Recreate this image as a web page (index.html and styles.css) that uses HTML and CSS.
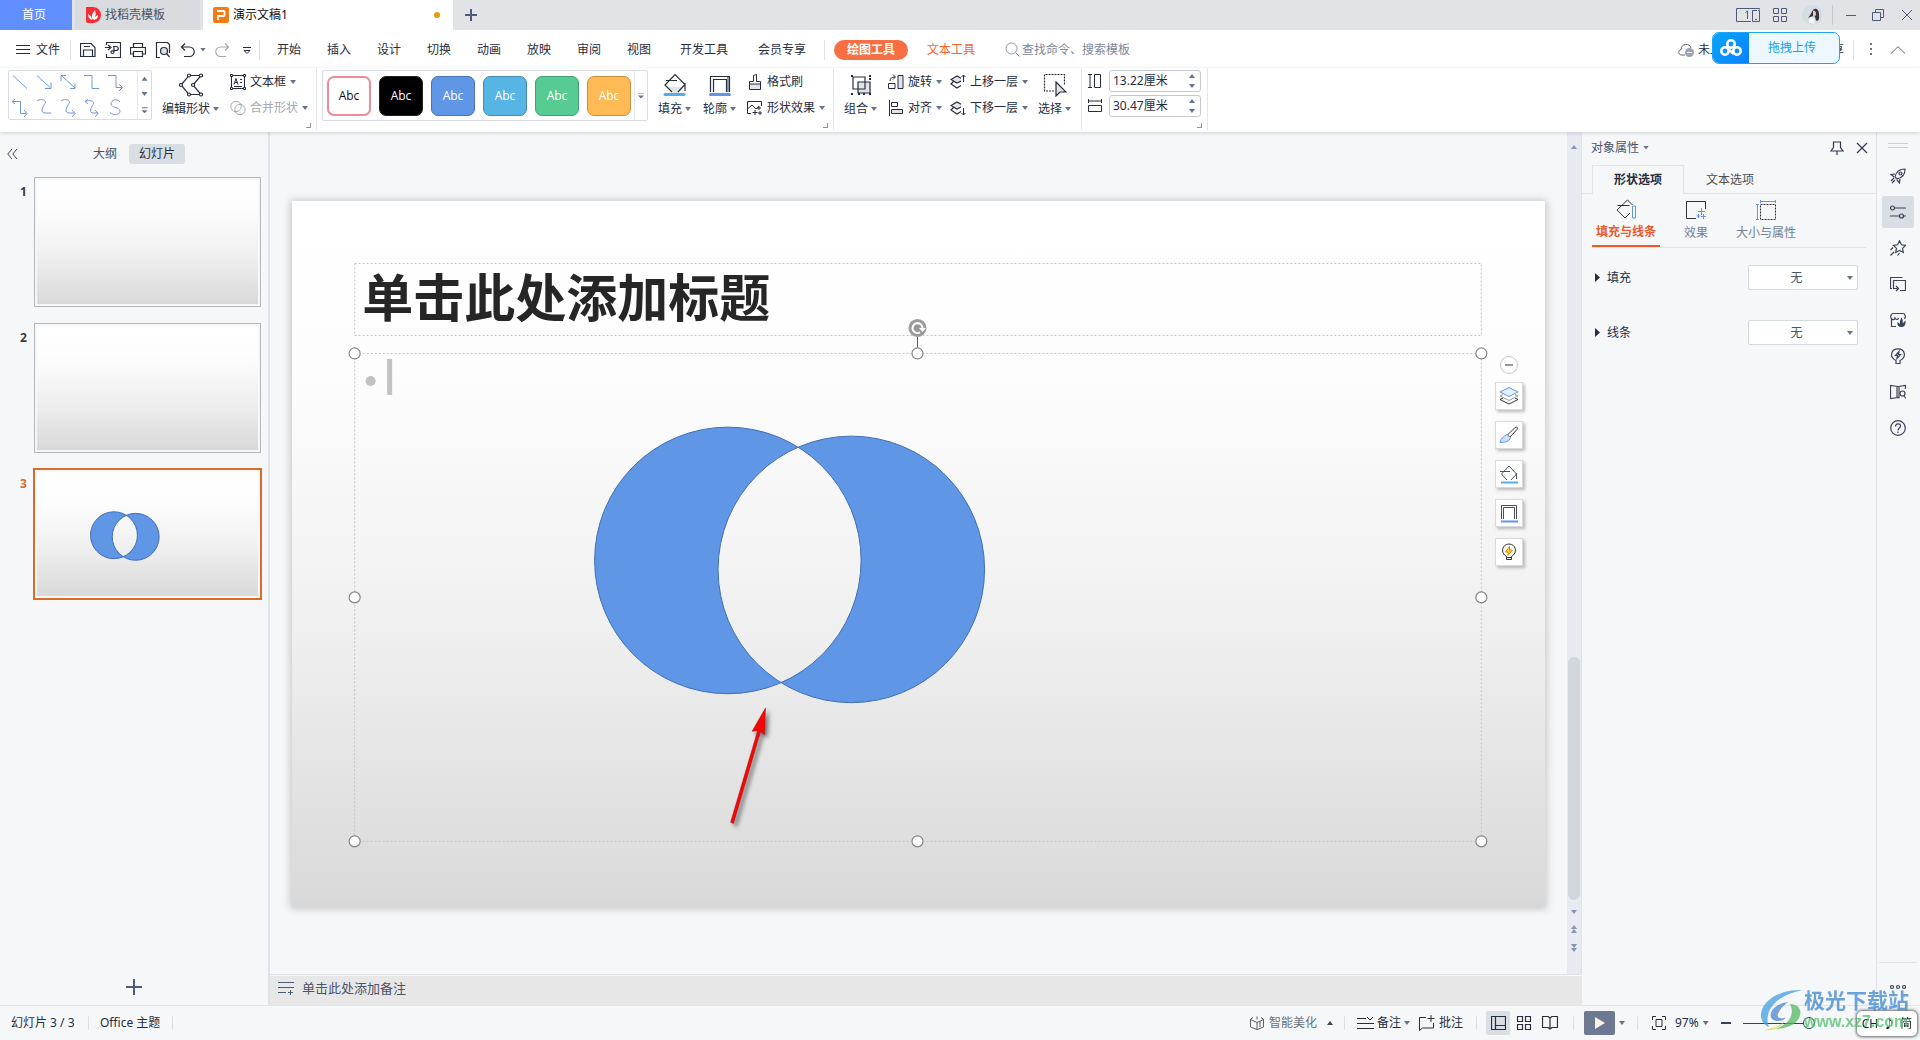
FILE: index.html
```html
<!DOCTYPE html>
<html lang="zh-CN">
<head>
<meta charset="utf-8">
<title>演示文稿1</title>
<link rel="stylesheet" href="styles.css">
</head>
<body>
<svg class="defs" aria-hidden="true">
  <symbol id="venn" viewBox="0 0 1253 705">
    <path fill="#5f96e6" stroke="#416fb4" vector-effect="non-scaling-stroke" fill-rule="evenodd" d="M302.500 359.500a133.300 133.300 0 1 0 266.600 0a133.300 133.300 0 1 0-266.600 0zM426 368.500a133.300 133.300 0 1 0 266.600 0a133.300 133.300 0 1 0-266.600 0z"/>
  </symbol>
  <symbol id="bucket" viewBox="0 0 24 24">
    <path fill="#e1e4e8" d="M5 14h15l-6 6h-3z"/>
    <path fill="none" stroke="currentColor" stroke-width="1.200" d="M9 19l-7-7L12 1.500L22 11.500L15 19M3 7.500h11M22 10v8"/>
    <path stroke="#4fb0e2" stroke-width="3" stroke-linecap="round" d="M2 21.500h19"/>
  </symbol>
  <symbol id="frame" viewBox="0 0 24 24">
    <path fill="none" stroke="currentColor" stroke-width="1.200" d="M2.500 19V3.500h19V19M5.500 19V6.500h13V19"/>
    <path fill="#8d94a1" d="M19 4h2v15h-2z"/>
    <path stroke="#5f96e6" stroke-width="3" stroke-linecap="round" d="M2.500 21.500h19"/>
  </symbol>
  <symbol id="layers" viewBox="0 0 16 16">
    <path fill="#e1e4e8" d="M1 5.500L7 2L11 4.500V8L7 9.500z"/>
    <path fill="none" stroke="currentColor" stroke-width="1.200" d="M11 4.200L7 2L1 5.500L7 9L11 7M3.500 7.500L1 10L7 14L11 11.500"/>
  </symbol>
</svg>

<header class="titlebar">
  <button class="doc-tab home">首页</button>
  <button class="doc-tab template">
    <svg width="16" height="16" viewBox="0 0 16 16"><path fill="#fb2b36" d="M1 0h7a8 8 0 0 1 0 16H3a2 2 0 0 1-2-2z"/><path fill="#fff" d="M8 13C6 10 7 6 10 3c1 4 1 7-2 10zM7 13c-3-1-4-3-4-6c2 1 4 3 4 6zM9 13c0-2 1-4 4-5c0 3-1 4-4 5z"/></svg>
    <span>找稻壳模板</span>
  </button>
  <button class="doc-tab current">
    <svg width="16" height="16" viewBox="0 0 16 16"><rect width="16" height="16" rx="2" fill="#f57c14"/><path fill="none" stroke="#fff" stroke-width="1.800" d="M5 13V9h5.500a1 1 0 0 0 1-1V5a1 1 0 0 0-1-1H4"/></svg>
    <span>演示文稿1</span>
    <i class="unsaved"></i>
  </button>
  <button class="new-tab" aria-label="新建"><svg width="12" height="12" viewBox="0 0 12 12"><path stroke="#4d5a7a" stroke-width="2" d="M6 0v12M0 6h12"/></svg></button>
  <div class="window-tools">
    <button aria-label="窗口"><svg width="24" height="14" viewBox="0 0 24 14" fill="none" stroke="#4d5a7a"><path d="M15 13.500H.5V.5h23v1M9.500 4.500L11.500 3v8"/><path d="M21 2.500h-4.500v11h7v-11H22M19 11.500h2"/></svg></button>
    <button aria-label="应用"><svg width="14" height="14" viewBox="0 0 14 14" fill="none" stroke="#4d5a7a"><path d="M.5.5h5v5h-5zM8.500.5h5v5h-5zM.5 8.500h5v5h-5zM8.500 8.500h5v5h-5z"/></svg></button>
    <button aria-label="用户"><svg width="20" height="20" viewBox="0 0 20 20"><circle cx="10" cy="10" r="10" fill="#d3dde3"/><path fill="#39333d" d="M11 5c3-3 6 0 6 4c0 3 1 6-2 7c-2-1-1-4-3-5c-2 0-4 1-6 2c2-2 3-5 5-8z"/><path fill="#e8c8bd" d="M11 6c2-1 3 1 3 3s-2 3-3 2z"/><path fill="#f4f4f4" d="M7 14c2-2 4-2 5 0l1 4c-2 1-4 1-6-1z"/></svg></button>
    <i class="rule"></i>
    <button aria-label="最小化"><svg width="12" height="12" viewBox="0 0 12 12"><path stroke="#4d5a7a" d="M1 6.500h10"/></svg></button>
    <button aria-label="还原"><svg width="12" height="12" viewBox="0 0 12 12" fill="none" stroke="#4d5a7a"><path d="M.5 3.500h8v8h-8zM3.500 3.500v-3h8v8h-3"/></svg></button>
    <button aria-label="关闭"><svg width="12" height="12" viewBox="0 0 12 12" stroke="#4d5a7a"><path d="M1 1l10 10M11 1L1 11"/></svg></button>
  </div>
</header>

<nav class="menubar">
  <button class="file"><svg width="14" height="12" viewBox="0 0 14 12" stroke="currentColor"><path d="M0 1.500h14M0 5.500h14M0 9.500h14"/></svg>文件</button>
  <i class="rule"></i>
  <div class="quick">
    <button aria-label="保存"><svg width="16" height="16" viewBox="0 0 16 16"><path d="M.5 14.500V1.500h10.500l4 4v9zM3.500 14.500V8h9v6.500M4 4.500h6"/></svg></button>
    <button aria-label="输出为PDF"><svg width="16" height="16" viewBox="0 0 16 16"><path d="M1.500 3V.5h14v15h-14V12M0 5.500h5M3 3l3 2.500L3 8M8 4.500h3c3 0 3 4 0 4H9M9 5v5c0 2-3 2-3 0s3-1 3 0"/></svg></button>
    <button aria-label="打印"><svg width="16" height="16" viewBox="0 0 16 16"><path d="M3.500 5V1.500h9V5M3.500 12H.5V5.500h15V12h-3M3.500 9.500h9v5h-9z"/></svg></button>
    <button aria-label="打印预览"><svg width="16" height="16" viewBox="0 0 16 16"><path d="M5 15.500H1.500V.5h11l2 2V11"/><circle cx="9" cy="9" r="3.500" fill="#d9dde4"/><path d="M11.500 11.500l3 3.500"/></svg></button>
    <button aria-label="撤销"><svg width="16" height="16" viewBox="0 0 16 16"><path d="M5 1.500L1.500 5L5 8.500M2 5h7.500a4.700 4.700 0 0 1 0 9.500H4"/></svg></button>
    <i class="caret"></i>
    <button class="off" aria-label="恢复"><svg width="16" height="16" viewBox="0 0 16 16"><path d="M11 1.500L14.500 5L11 8.500M14 5H6.500a4.700 4.700 0 0 0 0 9.500H12"/></svg></button>
    <button class="overflow" aria-label="更多"><svg width="10" height="10" viewBox="0 0 10 10"><path d="M1 2.500h8M2 5.500h6L5 8.500z"/></svg></button>
  </div>
  <i class="rule"></i>
  <div class="tabs">
    <button>开始</button><button>插入</button><button>设计</button><button>切换</button><button>动画</button><button>放映</button><button>审阅</button><button>视图</button><button class="wide">开发工具</button><button class="wide">会员专享</button>
  </div>
  <i class="rule"></i>
  <button class="pill">绘图工具</button>
  <button class="text-tool">文本工具</button>
  <label class="search"><svg width="15" height="15" viewBox="0 0 15 15" fill="none" stroke="#8b95a9"><circle cx="6.500" cy="6.500" r="5.500"/><path d="M10.500 10.500l4 4"/></svg><input type="text" placeholder="查找命令、搜索模板" aria-label="查找命令"></label>
  <div class="share">
    <button class="cloud"><svg width="16" height="14" viewBox="0 0 16 14"><path fill="none" stroke="#5c6579" d="M7 12H3.500C0 12 0 7 3 6.500C3 0 12 0 13 5"/><circle cx="11.500" cy="9.500" r="4.500" fill="#9aa3b5"/><path stroke="#fff" d="M9 9.500h5"/></svg>未上云</button>
    <button class="send">分享</button>
    <i class="rule"></i>
    <button class="dots" aria-label="更多"><svg width="3" height="13" viewBox="0 0 3 13" fill="#6b7285"><path d="M0 0h2v2H0zM0 5h2v2H0zM0 10h2v2H0z"/></svg></button>
    <button aria-label="收起"><svg width="14" height="8" viewBox="0 0 14 8" fill="none" stroke="#5c6579"><path d="M0 7.500L7 .7l7 6.800"/></svg></button>
  </div>
  <button class="upload">
    <span class="upload-mark"><svg width="22" height="18" viewBox="0 0 22 18" fill="none" stroke="#fff" stroke-width="2.600"><circle cx="11" cy="5" r="3.700"/><circle cx="5" cy="12" r="3.700"/><circle cx="17" cy="12" r="3.700"/><path d="M8 10l6 5"/></svg></span>
    <span class="upload-text">拖拽上传</span>
  </button>
</nav>

<section class="ribbon">
  <div class="group shapes">
    <div class="gallery">
      <svg class="lines" width="128" height="48" viewBox="0 0 128 48" fill="none" stroke="#6f97dc">
        <path d="M4 4.500l14 13M28 4.500l13 12M36 17.500h6v-6M53 5l13 12M52 10V4.500h5M61 17.500h5v-5M75 4.500h8v13h7M99 4.500h8v12h6M110 13l3.500 3.500L110 20"/>
        <path d="M6 28l-3 2.500L6 33M3.500 30.500h8v12h6M15 39l3 3.500L15 46M28 29.500c6-2 10 0 8 3s-6 10 1 9.500h5M52 29.500c6-2 10 0 8 3s-6 10 1 9.500h5M63 39l3 3.500L63 46M79 28l-3 2.500L79 33M76 30.500c6-2 10 0 8 3s-5 9 1 8.500h4M86 39l3 3.500L86 46M111 31c-3-4-9-2-9 2s9 3 9 7s-6 5-10 1.500"/>
      </svg>
      <div class="stepper"><i class="caret up"></i><i class="caret"></i><i class="caret more"></i></div>
    </div>
    <button class="big edit"><svg width="24" height="24" viewBox="0 0 24 24" fill="#fff" stroke="currentColor" stroke-width="1.200"><path fill="none" d="M22 2.500H10L2 12l8 9.500h12L14 12z"/><circle cx="22" cy="2.500" r="1.500"/><circle cx="10" cy="2.500" r="1.500"/><circle cx="2" cy="12" r="1.500"/><circle cx="10" cy="21.500" r="1.500"/><circle cx="22" cy="21.500" r="1.500"/><circle cx="14" cy="12" r="1.500"/></svg><span>编辑形状<i class="caret"></i></span></button>
    <div class="pair">
      <button><svg width="16" height="16" viewBox="0 0 16 16" fill="none" stroke="currentColor"><path d="M1.500 1.500h13v13h-13z"/><path fill="#fff" d="M.5.5h2v2h-2zM13.500.5h2v2h-2zM.5 13.500h2v2h-2zM13.500 13.500h2v2h-2z"/><path d="M4 10.500l2-6l2 6M5 8.500h2.500M10 5.500h2M10 8.500h2M4 12.500h8"/></svg>文本框<i class="caret"></i></button>
      <button class="off"><svg width="16" height="16" viewBox="0 0 16 16" fill="none" stroke="currentColor"><circle cx="6" cy="6.500" r="5.200"/><circle cx="10" cy="9.500" r="5.200"/></svg>合并形状<i class="caret"></i></button>
    </div>
    <i class="launcher"></i>
  </div>
  <div class="group styles">
    <div class="swatches">
      <button class="sw outline">Abc</button><button class="sw black">Abc</button><button class="sw blue">Abc</button><button class="sw sky">Abc</button><button class="sw green">Abc</button><button class="sw amber">Abc</button>
      <div class="expand"><i class="caret more"></i></div>
    </div>
    <button class="big fill"><svg width="24" height="24"><use href="#bucket"/></svg><span>填充<i class="caret"></i></span></button>
    <button class="big line"><svg width="24" height="24"><use href="#frame"/></svg><span>轮廓<i class="caret"></i></span></button>
    <div class="pair">
      <button><svg width="16" height="16" viewBox="0 0 16 16" fill="none" stroke="currentColor"><path fill="#e1e4e8" d="M2.500 10h11v5.500h-11z"/><path d="M2.500 10V7.500h4v-6l3-1v7h4V10"/></svg>格式刷</button>
      <button><svg width="16" height="16" viewBox="0 0 16 16" fill="none" stroke="currentColor"><path d="M4 13.500H.5v-12h14V6M.5 9L5 5l4 4l3-3M12 6v4M10 8h4M8 10v5M5.500 12.500h5M13 11v4M11 13h4"/></svg>形状效果<i class="caret"></i></button>
    </div>
    <i class="launcher"></i>
  </div>
  <div class="group arrange">
    <button class="big"><svg width="24" height="24" viewBox="0 0 24 24" fill="none" stroke="currentColor" stroke-width="1.200"><path fill="#e1e4e8" d="M9 9h12v11H9z"/><path d="M4 4h12v12H4z"/><path fill="currentColor" stroke="none" d="M2 2h2v2H2zM20 2h2v2h-2zM2 20h2v2H2zM20 20h2v2h-2zM9 20h2v2H9zM14 20h2v2h-2zM20 5h2v2h-2z"/></svg><span>组合<i class="caret"></i></span></button>
    <div class="pair">
      <button><svg width="16" height="16" viewBox="0 0 16 16" fill="none" stroke="currentColor"><path fill="#e1e4e8" d="M10 1.500h5v13h-5z"/><path d="M.5 9.500H7v5H.5zM2 7c0-3 2-4 5-4M5 .5L7.500 3L5 5.500"/></svg>旋转<i class="caret"></i></button>
      <button><svg width="16" height="16" viewBox="0 0 16 16" fill="none" stroke="currentColor"><path d="M1.500 0v16M3.500 2.500h6v4h-6z"/><path fill="#e1e4e8" d="M3.500 9.500h11v4h-11z"/></svg>对齐<i class="caret"></i></button>
    </div>
    <div class="pair">
      <button><svg width="16" height="16" viewBox="0 0 16 16" fill="none"><use href="#layers"/><path stroke="currentColor" d="M13.500 1v7M11.500 3l2-2l2 2"/></svg>上移一层<i class="caret"></i></button>
      <button><svg width="16" height="16" viewBox="0 0 16 16" fill="none"><use href="#layers"/><path stroke="currentColor" d="M13.500 8v7M11.500 13l2 2l2-2"/></svg>下移一层<i class="caret"></i></button>
    </div>
    <button class="big pick"><svg width="24" height="24" viewBox="0 0 24 24" fill="none" stroke="currentColor" stroke-width="1.200"><path stroke-dasharray="2 1" d="M11 18H1.500V1.500h20V12"/><path fill="#e1e4e8" d="M13 9v14l4-4h6z"/></svg><span>选择<i class="caret"></i></span></button>
  </div>
  <div class="group size">
    <label class="measure"><svg width="14" height="16" viewBox="0 0 14 16" fill="none" stroke="currentColor"><path d="M0 1.500h4M0 14.500h4M2 1.500v13M6.500 1.500h6v13h-6z"/></svg><span class="field"><input type="text" value="13.22厘米" aria-label="高度"><span class="spin"><i class="caret up"></i><i class="caret"></i></span></span></label>
    <label class="measure"><svg width="14" height="16" viewBox="0 0 14 16" fill="none" stroke="currentColor"><path d="M.5 1v4M13.500 1v4M.5 3h13M.5 7.500h13v6H.5z"/></svg><span class="field"><input type="text" value="30.47厘米" aria-label="宽度"><span class="spin"><i class="caret up"></i><i class="caret"></i></span></span></label>
    <i class="launcher"></i>
  </div>
</section>

<main class="workspace">
  <aside class="slides">
    <div class="slides-head">
      <button class="fold" aria-label="收起"><svg width="11" height="12" viewBox="0 0 11 12" fill="none" stroke="#3d4557"><path d="M5 1L.8 6L5 11M10 1L5.800 6L10 11"/></svg></button>
      <button class="seg">大纲</button>
      <button class="seg on">幻灯片</button>
    </div>
    <ol class="thumbs">
      <li><span>1</span><div class="thumb"><div class="mini"></div></div></li>
      <li><span>2</span><div class="thumb"><div class="mini"></div></div></li>
      <li class="on"><span>3</span><div class="thumb"><div class="mini"><svg><use href="#venn"/></svg></div></div></li>
    </ol>
    <button class="add" aria-label="新建幻灯片"><svg width="16" height="16" viewBox="0 0 16 16"><path stroke="#4d5a7a" stroke-width="2" d="M8 0v16M0 8h16"/></svg></button>
  </aside>

  <section class="editor">
    <div class="canvas-row">
      <div class="canvas">
        <div class="slide">
          <h1 class="title">单击此处添加标题</h1>
          <svg class="art" viewBox="0 0 1253 705" fill="none">
            <g stroke="#c4c4c4" stroke-dasharray="2 2"><path d="M62.500 62.500h1127v72h-1127zM62.500 152.500h1127v488h-1127z"/></g>
            <circle cx="78.500" cy="180" r="5" fill="#c2c2c4"/><path fill="#c2c2c2" d="M95 158h5v36h-5z"/>
            <use href="#venn"/>
            <path stroke="#555" d="M625.500 136v11"/><circle cx="625.500" cy="127" r="9" fill="#9a9a9a"/><path stroke="#fff" stroke-width="2" d="M628 131.500a5 5 0 1 1 2.500-4.500"/><path fill="#fff" d="M627 127h7l-3.500 4z"/>
            <g fill="#fff" stroke="#858585" stroke-width="1.200"><circle cx="62.500" cy="152.500" r="5.500"/><circle cx="625.500" cy="152.500" r="5.500"/><circle cx="1189.500" cy="152.500" r="5.500"/><circle cx="62.500" cy="396.500" r="5.500"/><circle cx="1189.500" cy="396.500" r="5.500"/><circle cx="62.500" cy="640.500" r="5.500"/><circle cx="625.500" cy="640.500" r="5.500"/><circle cx="1189.500" cy="640.500" r="5.500"/></g>
            <path class="pointer" fill="#fb0404" stroke="#8c1010" stroke-width=".4" d="M473.500 507L460 530.500l5.500-.5L438.500 621.500l3 1.200L468.500 531l4 3z"/>
          </svg>
          <div class="float-tools">
            <button class="minus" aria-label="收起"><svg width="18" height="18" viewBox="0 0 18 18"><circle cx="9" cy="9" r="8.500" fill="#fff" stroke="#c8c8c8"/><path stroke="#999" stroke-width="2" d="M5 9h8"/></svg></button>
            <button aria-label="图层"><svg width="20" height="20" viewBox="0 0 20 20" fill="none"><path stroke="#333" d="M1 13.500l9 4.500l9-4.500l-3-1.500M1 13.500L4 12"/><path stroke="#999" d="M1 10l9 4.500L19 10l-3-1.500M1 10l3-1.500"/><path fill="#e6eefb" stroke="#5f96e6" d="M1 6l9-4.500L19 6l-9 4.500z"/></svg></button>
            <button aria-label="画笔"><svg width="20" height="20" viewBox="0 0 20 20"><path fill="#fff" stroke="#333" d="M8.500 10L16 2.500c2-1 3 0 2 2L11 12z"/><path fill="#cfe0fa" stroke="#5f96e6" d="M8 9.500l3.500 3c-1 4-5 5-10.500 5c1-4 3-6 7-8z"/></svg></button>
            <button aria-label="填充"><svg width="20" height="20" viewBox="0 0 20 20" fill="none" stroke="#4a5060"><path d="M8 16L2.500 10L10 2l7.500 8L12 16M1 7.500h10M17.500 9v6"/><path stroke="#4fb0e2" stroke-width="2" d="M2 18.500h17"/></svg></button>
            <button aria-label="轮廓"><svg width="20" height="20" viewBox="0 0 20 20" fill="none" stroke="#4a5060"><path d="M2.500 16V2.500h15V16M4.500 16V4.500h11V16"/><path stroke="#5f96e6" stroke-width="2" d="M2 18.500h17"/></svg></button>
            <button aria-label="灵感"><svg width="20" height="20" viewBox="0 0 20 20" fill="none" stroke="#333"><path d="M7.500 14.500C1 11 3 2 10 2s9 9 2.500 12.500v3h-5zM7.500 15.500h5"/><path fill="#ffd21f" stroke="#d98a16" d="M10.500 4.500L6.500 10H9v3.500L13.500 8H10.500z"/></svg></button>
          </div>
        </div>
      </div>
      <div class="scroll">
        <i class="caret up"></i>
        <div class="scroll-thumb"></div>
        <i class="caret"></i>
        <span class="double"><i class="caret up"></i><i class="caret up"></i></span>
        <span class="double"><i class="caret"></i><i class="caret"></i></span>
      </div>
    </div>
    <div class="notes"><svg width="16" height="14" viewBox="0 0 16 14" stroke="#4d5a7a"><path d="M0 1.500h16M0 6.500h16M0 11.500h8M10 11.500h5M12.500 9v5"/></svg>单击此处添加备注</div>
  </section>

  <aside class="props">
    <div class="props-head"><button class="props-title">对象属性<i class="caret"></i></button>
      <button class="pin" aria-label="固定"><svg width="14" height="14" viewBox="0 0 14 14" fill="none" stroke="#2f3a4f" stroke-width="1.200"><path d="M3.500 1h7v5.500l2.500 3.500H1l2.500-3.500zM7 10v4"/></svg></button>
      <button aria-label="关闭"><svg width="12" height="12" viewBox="0 0 12 12" stroke="#2f3a4f" stroke-width="1.200"><path d="M1 1l10 10M11 1L1 11"/></svg></button></div>
    <div class="props-tabs"><button class="on">形状选项</button><button>文本选项</button></div>
    <div class="props-icons">
      <button class="on"><svg width="20" height="20" viewBox="0 0 20 20" fill="none" stroke="#333"><path d="M14 14l-5 5l-8-8L11.500 1l5 5M1.500 6.500h12"/><path stroke="#5f96e6" d="M16.500 7h3v12h-3z"/></svg>填充与线条</button>
      <button><svg width="20" height="20" viewBox="0 0 20 20" fill="none" stroke="#333"><path d="M10 18.500H.5v-17h19V9"/><path stroke="#5f96e6" d="M15.500 8v7M12 11.500h7M12.500 14v4M10.500 16h4M17.500 14v5M15 16.500h5"/></svg>效果</button>
      <button><svg width="20" height="20" viewBox="0 0 20 20" fill="none" stroke="#333"><path stroke-dasharray="2 1" d="M4.500 4.500h15v15h-15z"/><path stroke="#5f96e6" d="M1.500 4v16M0 4.500h3M0 19.500h3M4 1.500h16M4.500 0v3M19.500 0v3"/></svg>大小与属性</button>
    </div>
    <div class="prop"><i class="open"></i><label for="fill">填充</label><span class="drop"><select id="fill"><option>无</option></select><i class="caret"></i></span></div>
    <div class="prop"><i class="open"></i><label for="stroke">线条</label><span class="drop"><select id="stroke"><option>无</option></select><i class="caret"></i></span></div>
  </aside>

  <nav class="rail">
    <i class="grip"></i>
    <button aria-label="快捷"><svg viewBox="0 0 16 16"><path d="M5 9c1-5 4-8 10-8c0 5-3 9-8 10zM5 6L1 6.500L4 9M10 11l-.5 4L7 12M4 10l-3 3M5 12l-3 3"/><circle cx="10.500" cy="5.500" r="1.500"/></svg></button>
    <button class="on" aria-label="属性"><svg viewBox="0 0 16 16"><circle cx="2.500" cy="4" r="2"/><circle cx="11.500" cy="12" r="2"/><path d="M4.500 4H16M0 12h9.500M13.500 12H16"/></svg></button>
    <button aria-label="动画"><svg viewBox="0 0 16 16"><path d="M9.500.8l2 4l4 .6l-3 3l.8 4.100L9.500 10.500L5.700 12.500l.8-4.100l-3-3l4-.6zM3 7.500L.5 10M4 12l-3.500 3.500M9.500 13L7.500 15.500"/></svg></button>
    <button aria-label="切换"><svg viewBox="0 0 16 16"><path d="M2 12.500H.5V1.500h12M10 14.500h5.500v-10h-12v8h4M6 10l2.500 2.500L6 15"/></svg></button>
    <button aria-label="模板"><svg viewBox="0 0 16 16"><path d="M6 14.500H1.500V7C-.5 4 2 1.500 3 1.500h10c2 0 3 3 1.500 5.500M1.500 7c1 1 3 1 3.500-1c1 2 3 2 3.500 0"/><path fill="#39435a" stroke="none" d="M11.500 5.500c1.500 2 1.500 4 1 6l3-3c.5 4-1 6.500-4 6.500s-4.500-2-4-5l2.500 2c-.5-3 .5-4.500 1.500-6.500z"/></svg></button>
    <button aria-label="灵感"><svg viewBox="0 0 16 16"><path d="M6 12.500C-1 9 1 .8 8 .8s9 8.200 2 11.700v3H6zM9 3.500L5.500 7.500h2l-.5 3L10.500 6.500h-2z"/></svg></button>
    <button aria-label="素材"><svg viewBox="0 0 16 16"><path d="M9.500 14L8 13.500l-7.500 1v-13l7.500 1l7.500-1V5M7 2.500v11.500M9 2.500v11.500"/><circle cx="12.500" cy="9.500" r="2.500"/><path d="M14 12l2 2.500"/></svg></button>
    <button aria-label="帮助"><svg viewBox="0 0 16 16"><circle cx="8" cy="8" r="7.300"/><path d="M5.500 6.500C5.500 3 10.500 3 10.500 6c0 2-2.500 2-2.500 4.500M8 11.500V13"/></svg></button>
    <button class="rail-more" aria-label="更多"><svg viewBox="0 0 16 16"><circle cx="2" cy="8" r="1.500"/><circle cx="8" cy="8" r="1.500"/><circle cx="14" cy="8" r="1.500"/></svg></button>
  </nav>
</main>

<footer class="status">
  <span class="count">幻灯片 3 / 3</span><i class="rule"></i><span class="theme">Office 主题</span><i class="rule"></i>
  <div class="status-tools">
    <button class="smart"><svg width="14" height="14" viewBox="0 0 14 14" fill="none" stroke="#5a6070"><path d="M3 1.500L.5 3v8L7 13.500L13.500 11V3L11 1.500M.5 3.500L7 6.500l6.500-3M7 6.500v7M7 .5v3M10 5v6"/></svg>智能美化<i class="caret up"></i></button>
    <i class="rule"></i>
    <button class="note-btn"><svg width="17" height="14" viewBox="0 0 17 14" fill="none" stroke="currentColor"><path d="M0 2.500h9M0 7.500h17M0 12.500h17M10 1l3 3l3-3"/></svg>备注<i class="caret"></i></button>
    <button class="comment"><svg width="16" height="16" viewBox="0 0 16 16" fill="none" stroke="currentColor"><path d="M7 2.500H.5v13L3.500 13h11V8M12 0v7M8.500 3.500h7"/></svg>批注</button>
    <i class="rule"></i>
    <div class="views">
      <button class="on" aria-label="普通视图"><svg width="15" height="14" viewBox="0 0 15 14"><path d="M.5.5h14v13H.5zM4.500.5v13M4.500 9.500h10"/></svg></button>
      <button aria-label="浏览视图"><svg width="14" height="14" viewBox="0 0 14 14"><path d="M.5.5h5v5h-5zM8.500.5h5v5h-5zM.5 8.500h5v5h-5zM8.500 8.500h5v5h-5z"/></svg></button>
      <button aria-label="阅读视图"><svg width="16" height="14" viewBox="0 0 16 14"><path d="M8 2L6 .5H.5v11H6L8 13l2-1.500h5.500V.5H10zM8 2v11"/></svg></button>
    </div>
    <i class="rule"></i>
    <button class="play" aria-label="放映"><svg width="10" height="12" viewBox="0 0 10 12"><path fill="#fff3ea" d="M0 0l10 6L0 12z"/></svg></button><i class="caret"></i>
    <i class="rule"></i>
    <button class="zoom"><svg width="14" height="14" viewBox="0 0 14 14" fill="none" stroke="currentColor"><path d="M.5 4V.5H4M10 .5h3.500V4M13.500 10v3.500H10M4 13.500H.5V10M4 3.500h6v7H4z"/></svg><span>97%</span><i class="caret"></i></button>
    <button class="less" aria-label="缩小"></button>
    <input class="range" type="range" min="0" max="100" value="100" aria-label="缩放">
  </div>
</footer>

<div class="ime"><span>CH</span><span>♪</span><span>简</span></div>
<div class="mark">
  <svg width="44" height="42" viewBox="0 0 44 42"><path fill="#3f9fe0" d="M42 1C20 0 0 12 1 28c1 5 3 8 8 10C4 24 12 8 42 1z"/><path fill="#4a86d0" d="M28 13C14 15 8 24 12 30c3 3 12 3 14-2c-4 3-10 1-8-3c1-4 5-8 10-12z"/><path fill="#55b963" d="M30 15c14 0 14 16 0 22c-5 2-10 3-14 3c10-4 20-12 14-25z"/><path fill="#d9de3e" d="M4 41c6-1 14-3 20-8c-4 7-12 9-20 8z"/></svg>
  <div><b>极光下载站</b><em>www.xz7.com</em></div>
</div>
</body>
</html>
```
FILE: styles.css
```css
* { box-sizing: border-box; }
html, body { height: 100%; }
body {
  margin: 0;
  display: flex;
  flex-direction: column;
  overflow: hidden;
  background: #f5f7f9;
  color: #262d3d;
  font: 12px/16px "Noto Sans", "Noto Sans CJK SC", sans-serif;
}
button, input, select { font: inherit; color: inherit; border: 0; padding: 0; margin: 0; background: none; border-radius: 0; }
button { display: flex; align-items: center; justify-content: center; white-space: nowrap; flex: none; }
svg { display: block; flex: none; }
input { min-width: 0; outline: 0; }
.defs { position: absolute; width: 0; height: 0; }
.rule { width: 1px; height: 20px; background: #dcdfe5; flex: none; }
.caret { width: 6px; height: 4px; background: #66728e; clip-path: polygon(0 0, 100% 0, 50% 100%); flex: none; }
.caret.up { clip-path: polygon(50% 0, 100% 100%, 0 100%); }
.caret.more { height: 6px; clip-path: polygon(0 0, 100% 0, 100% 17%, 0 17%, 0 50%, 100% 50%, 50% 100%, 0 50%); }
.off { color: #a5a9b2; }

/* title bar */
.titlebar { display: flex; height: 30px; background: #e1e3e7; flex: none; }
.doc-tab { height: 30px; }
.doc-tab.home { width: 72px; background: #618fff; color: #fff; margin-right: 3px; padding-right: 4px; }
.doc-tab.template { width: 125px; background: #d9dbdf; color: #4b5262; justify-content: flex-start; gap: 4px; padding-left: 10px; margin-right: 3px; }
.doc-tab.current { width: 250px; background: #fff; color: #111; justify-content: flex-start; gap: 4px; padding: 0 13px 0 10px; }
.unsaved { width: 6px; height: 6px; border-radius: 3px; background: #e79a05; margin-left: auto; }
.new-tab { width: 35px; }
.window-tools { display: flex; align-items: center; margin-left: auto; padding-right: 7px; }
.window-tools button:nth-of-type(1) { width: 24px; margin-right: 13px; }
.window-tools button:nth-of-type(2) { width: 14px; margin-right: 15px; }
.window-tools button:nth-of-type(3) { margin-right: 10px; }
.window-tools .rule { background: #c3c7cf; margin-right: 12px; }
.window-tools button:nth-of-type(4) { margin-right: 15px; }
.window-tools button:nth-of-type(5) { margin-right: 17px; }

/* menu bar */
.menubar { display: flex; align-items: center; height: 38px; padding-top: 1px; background: #fff; position: relative; flex: none; }
.file { gap: 6px; padding: 0 10px 0 16px; }
.quick { display: flex; align-items: center; padding-left: 4px; }
.quick button { width: 25px; height: 24px; }
.quick svg { fill: none; stroke: currentColor; stroke-width: 1.2; }
.quick .overflow svg { stroke-width: 1; }
.quick .off { margin-left: 3px; }
.tabs { display: flex; padding: 0 4px; }
.tabs button { width: 50px; height: 24px; }
.tabs .wide { width: 76px; margin-left: 2px; }
.pill { width: 74px; height: 20px; border-radius: 10px; background: #f76f43; color: #fff; font-weight: 700; margin-left: 9px; }
.text-tool { color: #f4622f; margin: 0 30px 0 19px; }
.search { display: flex; align-items: center; gap: 2px; width: 140px; }
.search input { width: 120px; }
.search input::placeholder { color: #7b869d; opacity: 1; }
.share { display: flex; align-items: center; margin-left: auto; padding-right: 15px; }
.cloud { gap: 4px; margin-right: 86px; }
.send { margin-right: 9px; }
.dots { margin: 0 18px 0 16px; }
.upload { position: absolute; right: 80px; top: 2px; width: 128px; height: 32px; border: 1px solid #1ba3f7; border-radius: 7px; overflow: hidden; background: #edf7ff; z-index: 3; }
.upload-mark { display: flex; align-items: center; justify-content: center; width: 36px; height: 32px; background: linear-gradient(135deg, #06a7ff, #0a7fff); }
.upload-text { flex: 1; padding-right: 4px; color: #12a0fa; }

/* ribbon */
.ribbon { display: flex; height: 64px; background: #fff; box-shadow: 0 1px 4px rgba(0, 0, 0, .16); position: relative; z-index: 1; flex: none; }
.group { display: flex; align-items: flex-start; position: relative; border-right: 1px solid #e6e8ec; height: 62px; }
.launcher { position: absolute; right: 5px; bottom: 2px; width: 5px; height: 5px; border: solid #8b95a9; border-width: 0 1px 1px 0; }
.shapes { width: 317px; padding-left: 8px; }
.styles { width: 517px; padding-left: 5px; }
.arrange { width: 248px; padding-left: 10px; }
.size { width: 126px; flex-direction: column; padding: 2px 0 0 6px; gap: 3px; }
.gallery { display: flex; width: 144px; height: 50px; margin-top: 2px; border: 1px solid #d9dce2; border-radius: 2px; }
.stepper { display: flex; flex-direction: column; flex: 1; border-left: 1px solid #e6e8ec; align-items: center; justify-content: space-around; }
.big { flex-direction: column; gap: 4px; padding-top: 5px; }
.big span { display: flex; align-items: center; gap: 3px; }
.edit, .fill { margin-left: 10px; }
.line { margin-left: 12px; }
.pick { margin-left: 10px; }
.pair { display: flex; flex-direction: column; align-items: flex-start; margin: 1px 0 0 11px; }
.pair + .pair { margin-left: 8px; }
.pair button { height: 26px; gap: 4px; }
.swatches { display: flex; gap: 8px; width: 326px; height: 51px; margin-top: 2px; padding: 5px 0 0 4px; border: 1px solid #d9dce2; border-radius: 2px; }
.sw { width: 44px; height: 40px; border: 1px solid; border-radius: 7px; color: #fff; font-family: "Open Sans", "Noto Sans", sans-serif; }
.sw.outline { border: 2px solid #f08a98; background: #fff; color: #111; }
.sw.black { background: #000; border-color: #222; }
.sw.blue { background: #5f96e6; border-color: #4673b5; }
.sw.sky { background: #57b5e5; border-color: #438cb2; }
.sw.green { background: #56cb94; border-color: #439e73; }
.sw.amber { background: #ffba55; border-color: #c69042; }
.expand { flex: 1; display: flex; align-items: center; justify-content: center; margin: -5px 0 0 -5px; border-left: 1px solid #e6e8ec; }
.measure { display: flex; align-items: center; gap: 7px; }
.field { display: flex; align-items: center; width: 92px; height: 22px; border: 1px solid #c5c9d2; border-radius: 3px; padding: 0 5px 0 3px; }
.field input { flex: 1; }
.spin { display: flex; flex-direction: column; gap: 6px; }

/* work area */
.workspace { display: flex; flex: 1; min-height: 0; }
.slides { width: 270px; border-right: 2px solid #e1e3ec; display: flex; flex-direction: column; flex: none; }
.slides-head { display: flex; align-items: center; padding: 12px 0 0 7px; }
.fold { margin-right: 64px; }
.seg { height: 20px; padding: 0 11px; color: #4b5262; }
.seg.on { width: 56px; background: #d9dde4; border-radius: 3px; color: #262d3d; margin-left: 1px; }
.thumbs { list-style: none; margin: 13px 0 0; padding: 0; display: flex; flex-direction: column; gap: 16px; }
.thumbs li { display: flex; padding-left: 20px; font-weight: 700; color: #3b3b3b; }
.thumbs span { width: 14px; padding-top: 7px; }
.thumb { width: 227px; height: 130px; border: 1px solid #b5b8bb; padding: 2px; }
.thumbs .on { color: #d96c2b; }
.on .thumb { border-color: #d96c2b; outline: 1px solid #d96c2b; }
.mini, .slide { background: linear-gradient(#fff 0%, #fdfdfd 25%, #f0f0f0 60%, #dadada 98%, #d8d8d8); }
.mini { height: 124px; }
.mini svg { width: 100%; height: 100%; }
.add { margin: auto auto 10px; }
.editor { flex: 1; min-width: 0; display: flex; flex-direction: column; }
.canvas-row { flex: 1; display: flex; min-height: 0; }
.canvas { flex: 1; min-width: 0; padding: 69px 22px 0; }
.slide { position: relative; aspect-ratio: 16 / 9; box-shadow: 0 1px 8px 2px rgba(0, 0, 0, .19); }
.title { position: absolute; left: 5.6%; top: 8.2%; height: 10.4%; margin: 0; display: flex; align-items: center; font-size: 51px; line-height: 60px; font-weight: 700; color: #262626; font-family: "Noto Sans CJK SC", sans-serif; white-space: nowrap; }
.art { position: absolute; inset: 0; width: 100%; height: 100%; }
.pointer { filter: drop-shadow(3px 3px 2px rgba(0, 0, 0, .5)); }
.float-tools { position: absolute; right: 22px; top: 155px; display: flex; flex-direction: column; align-items: center; gap: 11px; }
.float-tools button { width: 28px; height: 28px; background: #fff; border: 1px solid #dadada; box-shadow: 2px 2px 3px rgba(0, 0, 0, .25); }
.float-tools .minus { height: 18px; border: 0; background: none; box-shadow: none; margin-bottom: -3px; }
.scroll { width: 15px; background: #e8eaf1; border-right: 1px solid #dfe2e8; display: flex; flex-direction: column; align-items: center; padding: 13px 0 22px; flex: none; }
.scroll .caret { background: #8994b3; }
.scroll-thumb { width: 12px; height: 243px; border-radius: 6px; background: #d2d6dd; margin: auto 0 10px; }
.double { display: flex; flex-direction: column; margin-top: 11px; }
.notes { display: flex; align-items: center; gap: 8px; height: 31px; padding: 0 0 4px 8px; font-size: 13px; color: #4b5468; background: #e7e7e7; border-top: 1px solid #dfe1e8; box-shadow: inset 0 1px #f5f7f9; flex: none; }

/* properties */
.props { width: 295px; border-right: 1px solid #e1e3e7; flex: none; }
.props-head { display: flex; align-items: center; height: 31px; padding: 0 8px 0 9px; }
.props-title { gap: 4px; color: #4b5468; margin-right: auto; }
.pin { margin-right: 12px; }
.props-tabs { display: flex; height: 29px; margin-top: 2px; padding-left: 10px; box-shadow: inset 0 -1px #e1e3e9; }
.props-tabs button { width: 92px; color: #4f4f4f; }
.props-tabs .on { font-weight: 700; color: #262d3d; border: 1px solid #e1e3e9; border-bottom: 0; background: #f5f7f9; }
.props-icons { display: flex; gap: 20px; margin: 0 10px; border-bottom: 1px solid #e1e3e9; }
.props-icons button { flex-direction: column; gap: 5px; height: 53px; padding: 0 4px; color: #74809a; }
.props-icons .on { color: #e95a2c; font-weight: 700; border-bottom: 2px solid #e95a2c; }
.prop { display: flex; align-items: center; padding: 0 18px 0 13px; margin-top: 17px; }
.prop + .prop { margin-top: 30px; }
.open { width: 5px; height: 9px; background: #262d3d; clip-path: polygon(0 0, 100% 50%, 0 100%); margin-right: 7px; }
.drop { position: relative; width: 110px; height: 25px; margin-left: auto; }
.drop select { appearance: none; width: 100%; height: 100%; background: #fff; border: 1px solid #d5d9e0; border-radius: 2px; text-align-last: center; padding-right: 13px; color: #4b5468; }
.drop .caret { position: absolute; right: 5px; top: 11px; }

/* side rail */
.rail { width: 43px; display: flex; flex-direction: column; align-items: center; padding: 11px 2px 0 0; gap: 4px; flex: none; }
.grip { width: 20px; height: 5px; border: solid #c9cdd4; border-width: 1px 0; margin-bottom: 8px; }
.rail button { width: 32px; height: 32px; border-radius: 2px; }
.rail svg { width: 16px; height: 16px; fill: none; stroke: #39435a; stroke-width: 1.2; }
.rail .on { background: #d9dde4; }
.rail .rail-more { margin-top: auto; width: 38px; height: 43px; border-top: 1px solid #e1e3e7; border-radius: 0; padding-top: 6px; }

/* status bar */
.status { display: flex; align-items: center; height: 35px; border-top: 1px solid #e1e3e7; padding-left: 11px; flex: none; }
.status .rule { height: 14px; }
.count { width: 77px; }
.theme { width: 83px; padding-left: 11px; }
.status-tools { display: flex; align-items: center; width: 676px; margin-left: auto; }
.status-tools button { justify-content: flex-start; }
.smart { width: 100px; padding-left: 6px; gap: 5px; color: #6a6f7b; }
.smart .caret { margin-left: 5px; background: #444; }
.note-btn { width: 68px; padding-left: 12px; gap: 3px; }
.comment { width: 63px; padding-left: 6px; gap: 4px; }
.views { display: flex; gap: 2px; width: 96px; padding-left: 9px; }
.status-tools .views button { width: 24px; height: 24px; justify-content: center; border-radius: 2px; }
.views svg { fill: none; stroke: currentColor; stroke-width: 1.2; }
.views .on { background: #d9dde4; }
.status-tools .play { width: 31px; height: 24px; margin: 0 4px 0 10px; justify-content: center; background: #6e7891; border-radius: 2px; }
.play + .caret { margin-right: 12px; }
.zoom { width: 83px; padding-left: 14px; gap: 4px; }
.zoom span { margin-left: 5px; }
.less { width: 10px; height: 2px; background: #35425e; margin-right: 12px; }
.range { appearance: none; width: 72px; height: 14px; }
.range::-webkit-slider-runnable-track { height: 1px; background: #35425e; }
.range::-webkit-slider-thumb { appearance: none; width: 12px; height: 12px; margin-top: -6px; border: 1px solid #35425e; border-radius: 6px; background: #f5f7f9; }

/* floating input indicator and site mark */
.ime { position: fixed; right: 3px; bottom: 4px; width: 60px; height: 25px; display: flex; align-items: center; justify-content: center; gap: 5px; background: #fff; border-radius: 5px; box-shadow: 0 0 3px 1px rgba(0, 0, 0, .6); color: #222; }
.mark { position: fixed; right: 11px; bottom: 8px; display: flex; align-items: center; opacity: .75; pointer-events: none; }
.mark b { display: block; font-size: 21px; line-height: 24px; color: #3d86cf; }
.mark em { display: block; font: 700 16px/20px "Liberation Sans", sans-serif; color: #4cc06c; }
```
